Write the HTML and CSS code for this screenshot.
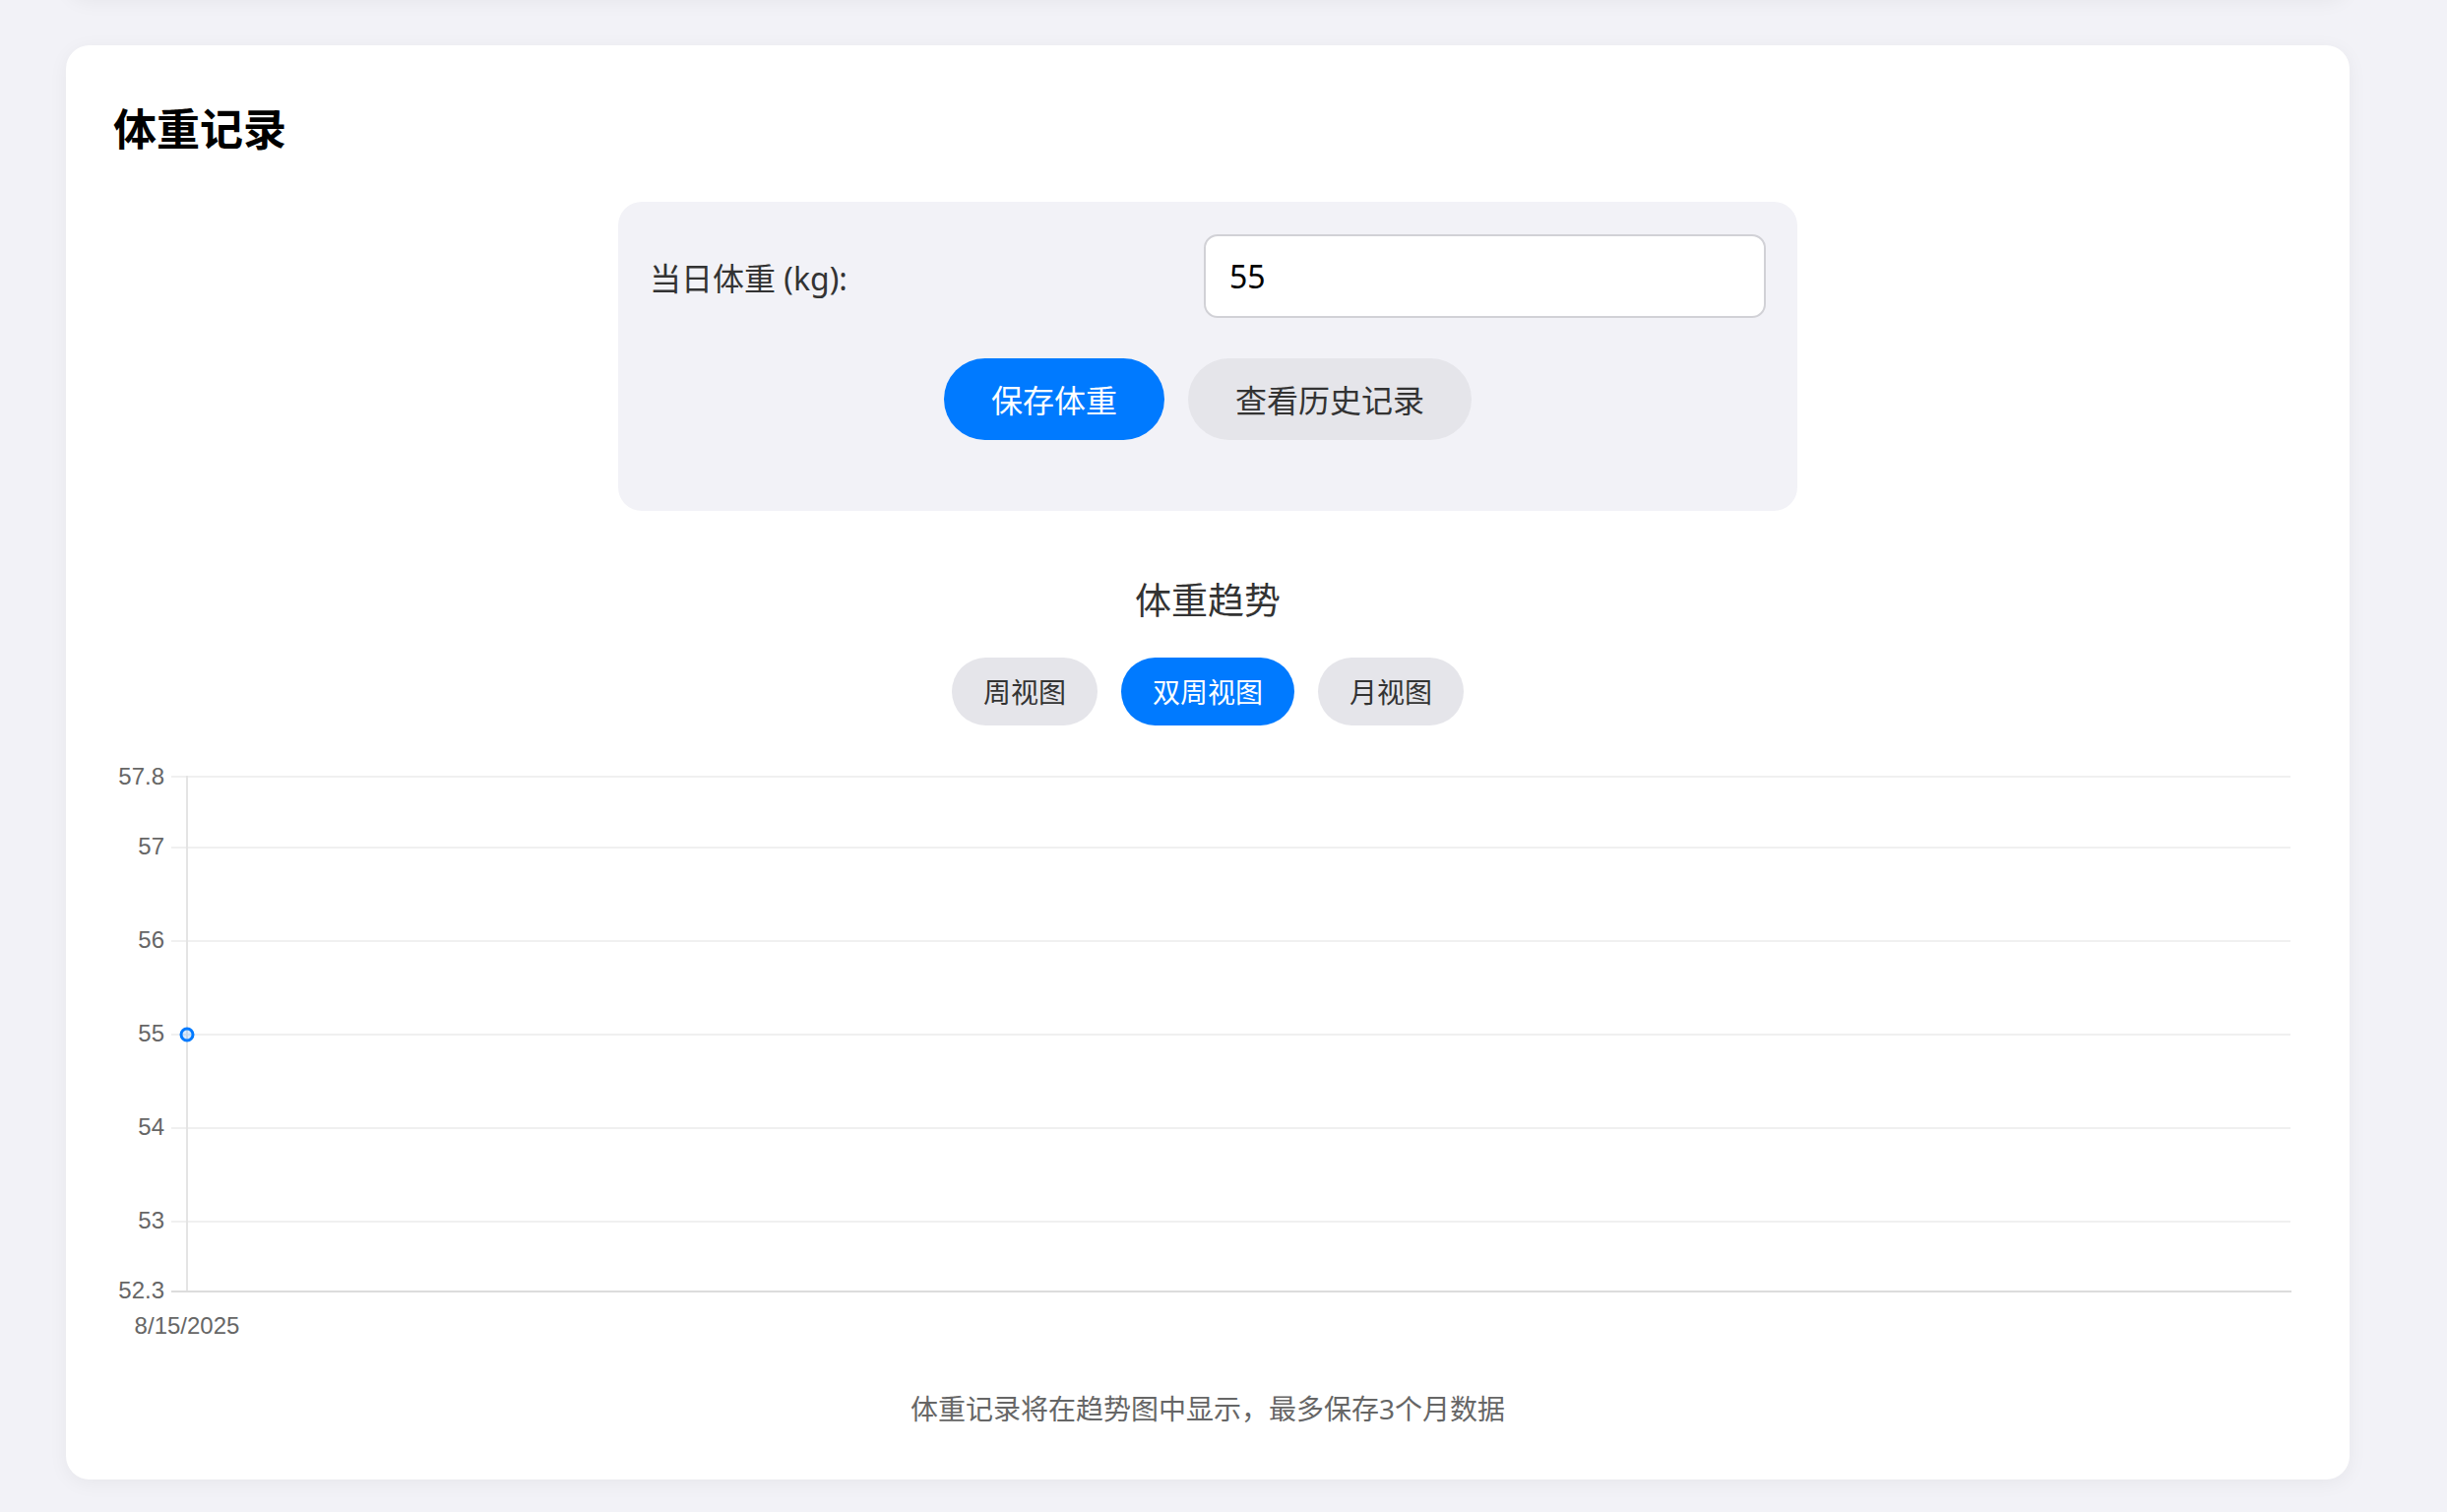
FILE: index.html
```html
<!DOCTYPE html>
<html lang="zh-CN">
<head>
  <meta charset="UTF-8" />
  <meta name="viewport" content="width=device-width, initial-scale=1.0" />
  <title>体重记录</title>
  <link rel="stylesheet" href="styles.css">
</head>
<body>
  <div class="page">
    <div class="card prev"></div>

    <div class="card">
      <h2>体重记录</h2>

      <div class="weight-form">
        <div class="form-row">
          <label for="weightInput">当日体重 (kg):</label>
          <input type="number" id="weightInput" value="55" />
        </div>
        <div class="form-actions">
          <button class="btn primary">保存体重</button>
          <button class="btn secondary">查看历史记录</button>
        </div>
      </div>

      <h3 class="chart-title">体重趋势</h3>
      <div class="view-toggle">
        <button class="pill">周视图</button>
        <button class="pill active">双周视图</button>
        <button class="pill">月视图</button>
      </div>

      <div class="chart">
        <svg width="100%" height="600" viewBox="0 0 2224 600">
          <g class="grid">
            <line x1="59" y1="19" x2="2212" y2="19" />
            <line x1="59" y1="91" x2="2212" y2="91" />
            <line x1="59" y1="186" x2="2212" y2="186" />
            <line x1="59" y1="281" x2="2212" y2="281" />
            <line x1="59" y1="376" x2="2212" y2="376" />
            <line x1="59" y1="471" x2="2212" y2="471" />
          </g>
          <line class="axis-y" x1="75" y1="18" x2="75" y2="542" />
          <line class="axis-x" x1="59" y1="542" x2="2213" y2="542" />
          <g class="tick-labels" text-anchor="end">
            <text x="52" y="27">57.8</text>
            <text x="52" y="98">57</text>
            <text x="52" y="193">56</text>
            <text x="52" y="288">55</text>
            <text x="52" y="383">54</text>
            <text x="52" y="478">53</text>
            <text x="52" y="549">52.3</text>
          </g>
          <text class="tick-labels" x="75" y="585" text-anchor="middle">8/15/2025</text>
          <circle class="point" cx="75" cy="281" r="6" />
        </svg>
      </div>

      <p class="note">体重记录将在趋势图中显示，最多保存3个月数据</p>
    </div>
  </div>
</body>
</html>
```

FILE: styles.css
```css
body {
  font-family: "Noto Sans", "Noto Sans CJK SC", sans-serif;
  background: #f2f2f7;
  margin: 0;
  color: #333;
}
.page {
  padding: 0 99px 0 67px;
}
.card {
  background: white;
  border-radius: 24px;
  box-shadow: 0 4px 20px rgba(0, 0, 0, 0.05);
  padding: 54px 48px 52px;
  margin-bottom: 48px;
}
.card.prev {
  height: 300px;
  margin-top: -302px;
  padding: 0;
}
h2 {
  margin: 0 0 43px;
  font-size: 44px;
  line-height: 62px;
  font-weight: bold;
  color: #000;
}
.weight-form {
  max-width: 1134px;
  margin: 0 auto;
  padding: 33px 32px 72px;
  background: #f2f2f7;
  border-radius: 24px;
}
.form-row {
  display: grid;
  grid-template-columns: 1fr 571px;
  align-items: center;
}
.form-row label {
  font-size: 32px;
  color: #333;
}
.form-row input {
  height: 85px;
  box-sizing: border-box;
  padding: 0 24px;
  font-family: inherit;
  font-size: 32px;
  color: #000;
  background: white;
  border: 2px solid #d1d1d6;
  border-radius: 14px;
  outline: none;
  -moz-appearance: textfield;
}
.form-row input::-webkit-inner-spin-button {
  -webkit-appearance: none;
}
.form-actions {
  display: flex;
  justify-content: center;
  gap: 24px;
  margin-top: 41px;
}
.btn, .pill {
  border: none;
  border-radius: 999px;
  font-family: inherit;
  cursor: pointer;
}
.btn {
  padding: 20px 48px 18px;
  font-size: 32px;
  line-height: 45px;
}
.primary, .pill.active {
  background: #007aff;
  color: white;
}
.secondary, .pill {
  background: #e5e5ea;
  color: #333;
}
.chart-title {
  margin: 66px 0 0;
  text-align: center;
  font-size: 37px;
  line-height: 50px;
  font-weight: normal;
  color: #333;
}
.view-toggle {
  display: flex;
  justify-content: center;
  gap: 24px;
  margin-top: 33px;
}
.pill {
  padding: 15px 32px 13px;
  font-size: 28px;
  line-height: 41px;
}
.chart {
  margin-top: 33px;
}
.chart svg {
  display: block;
}
.grid line {
  stroke: #f0f0f0;
  stroke-width: 2;
}
.axis-y {
  stroke: #e4e4e4;
  stroke-width: 2;
}
.axis-x {
  stroke: #dcdcdc;
  stroke-width: 2;
}
.tick-labels {
  font-family: "Liberation Sans", Arial, sans-serif;
  font-size: 24px;
  fill: #666;
}
.point {
  fill: rgba(0, 122, 255, 0.15);
  stroke: #007aff;
  stroke-width: 3;
}
.note {
  margin: 41px 0 0;
  text-align: center;
  font-size: 28px;
  line-height: 40px;
  color: #666;
}
```
